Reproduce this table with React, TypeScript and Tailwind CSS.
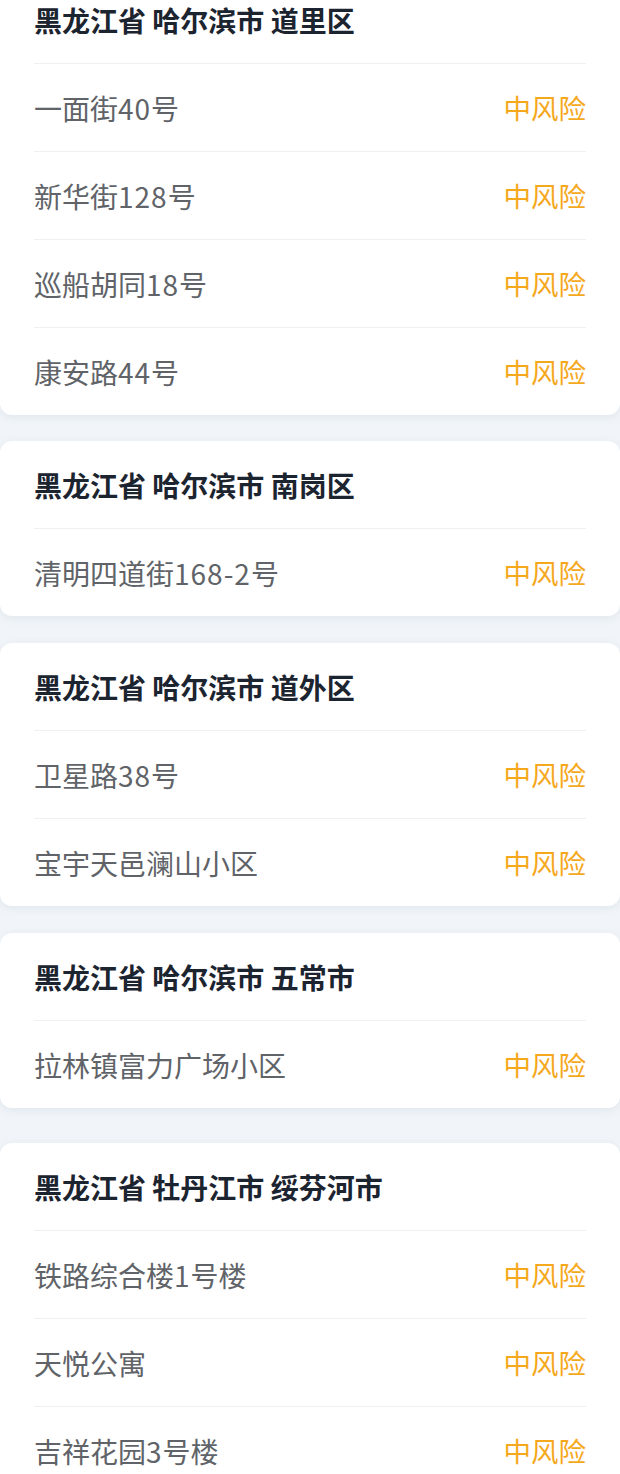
import React from "react";

type Group = { title: string; items: string[]; cls: string };

const groups: Group[] = [
  { title: "黑龙江省 哈尔滨市 道里区", items: ["一面街40号", "新华街128号", "巡船胡同18号", "康安路44号"], cls: "-mt-[24px]" },
  { title: "黑龙江省 哈尔滨市 南岗区", items: ["清明四道街168-2号"], cls: "mt-[26px]" },
  { title: "黑龙江省 哈尔滨市 道外区", items: ["卫星路38号", "宝宇天邑澜山小区"], cls: "mt-[27px]" },
  { title: "黑龙江省 哈尔滨市 五常市", items: ["拉林镇富力广场小区"], cls: "mt-[27px]" },
  { title: "黑龙江省 牡丹江市 绥芬河市", items: ["铁路综合楼1号楼", "天悦公寓", "吉祥花园3号楼"], cls: "mt-[35px]" },
];

function Addr({ text }: { text: string }) {
  const parts = text.split(/([0-9\-]+)/);
  return (
    <span className="text-[28px] text-[#606368]">
      {parts.map((p, i) =>
        /^[0-9\-]+$/.test(p) ? (
          <span key={i} className="tracking-[1px]">{p}</span>
        ) : (
          <span key={i}>{p}</span>
        )
      )}
    </span>
  );
}

export default function App() {
  return (
    <div
      className="w-[620px] h-[1474px] overflow-hidden bg-[#f1f5f9]"
      style={{ fontFamily: '"Noto Sans CJK SC", "Noto Sans", sans-serif' }}
    >
      {groups.map((g, gi) => (
        <div
          key={gi}
          className={`${g.cls} bg-white rounded-[12px] px-[34px] shadow-[0_2px_10px_rgba(100,120,150,0.12)]`}
        >
          <div className="h-[87px] flex items-center text-[28px] font-bold text-[#1c2430] leading-none">
            {g.title}
          </div>
          {g.items.map((it, i) => (
            <div
              key={i}
              className="h-[88px] flex items-center justify-between border-t border-[#eef0f3] leading-none"
            >
              <Addr text={it} />
              <span className="text-[27.5px] text-[#f5a81c]">中风险</span>
            </div>
          ))}
        </div>
      ))}
    </div>
  );
}
